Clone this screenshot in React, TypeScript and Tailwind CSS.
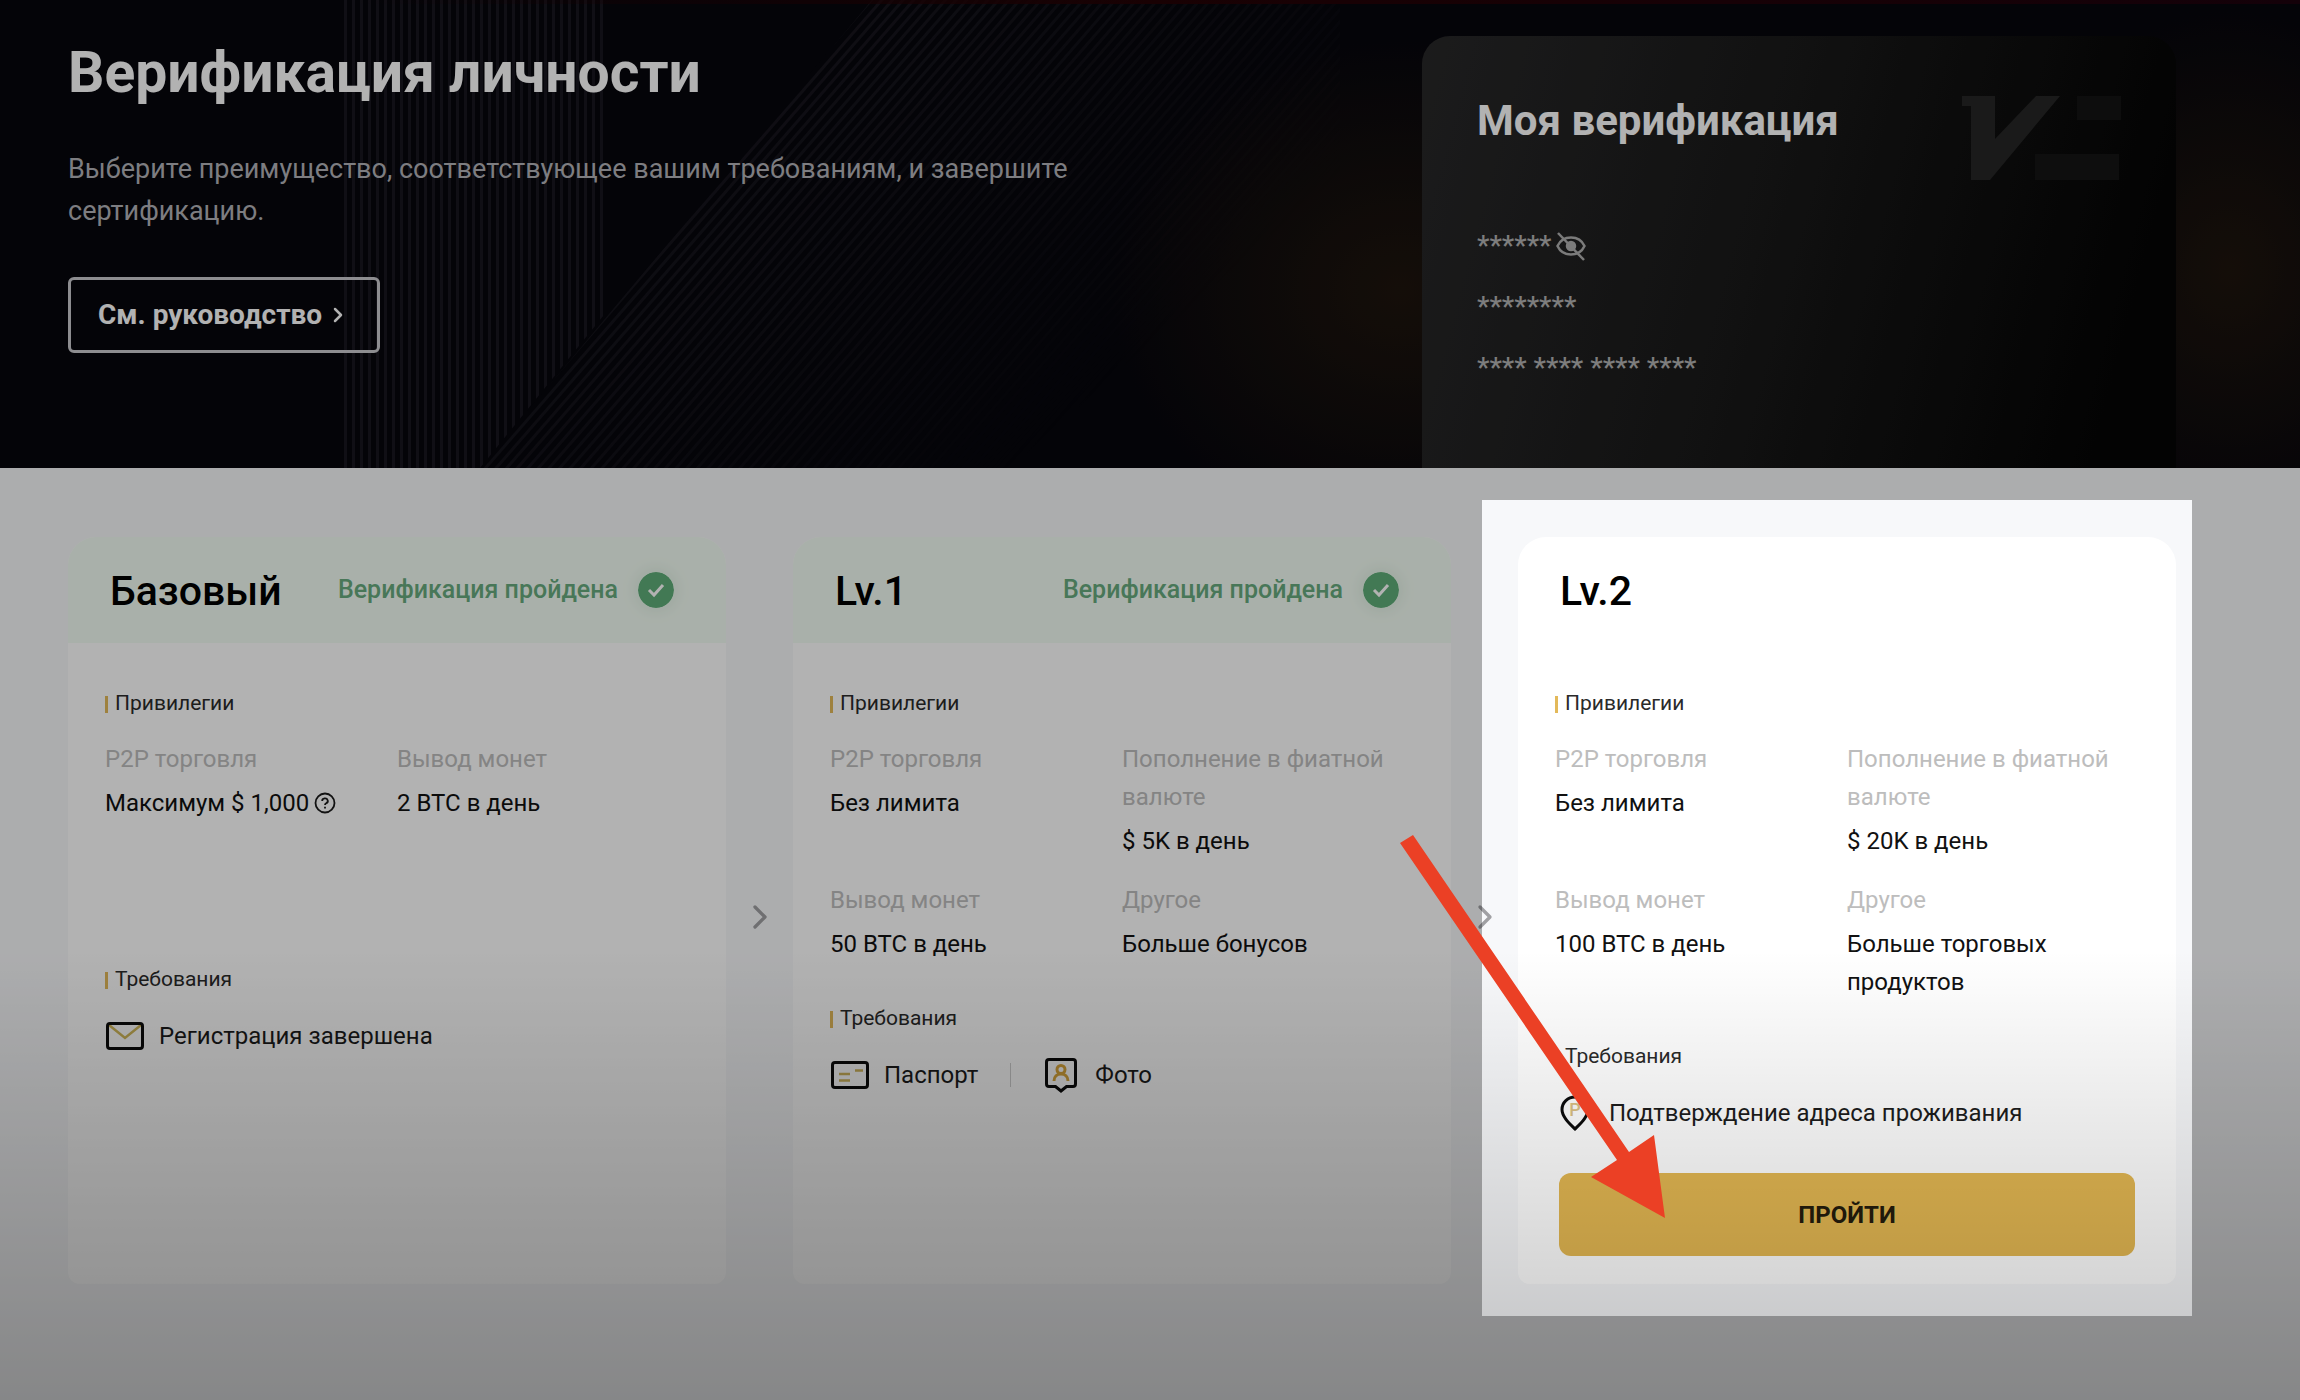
import React from 'react';
import { ChevronRight } from 'lucide-react';
import { clsx } from 'clsx';

type IconName = 'mail' | 'passport' | 'photo' | 'pin';

interface Privilege {
  label: string;
  value: string;
  help?: boolean;
}

interface Level {
  title: string;
  passed: boolean;
  privileges: Privilege[];
  requirements: { icon: IconName; text: string }[];
  action?: string;
}

const levels: Level[] = [
  {
    title: 'Базовый',
    passed: true,
    privileges: [
      { label: 'P2P торговля', value: 'Максимум $ 1,000', help: true },
      { label: 'Вывод монет', value: '2 BTC в день' },
    ],
    requirements: [{ icon: 'mail', text: 'Регистрация завершена' }],
  },
  {
    title: 'Lv.1',
    passed: true,
    privileges: [
      { label: 'P2P торговля', value: 'Без лимита' },
      { label: 'Пополнение в фиатной валюте', value: '$ 5K в день' },
      { label: 'Вывод монет', value: '50 BTC в день' },
      { label: 'Другое', value: 'Больше бонусов' },
    ],
    requirements: [
      { icon: 'passport', text: 'Паспорт' },
      { icon: 'photo', text: 'Фото' },
    ],
  },
  {
    title: 'Lv.2',
    passed: false,
    privileges: [
      { label: 'P2P торговля', value: 'Без лимита' },
      { label: 'Пополнение в фиатной валюте', value: '$ 20K в день' },
      { label: 'Вывод монет', value: '100 BTC в день' },
      { label: 'Другое', value: 'Больше торговых продуктов' },
    ],
    requirements: [{ icon: 'pin', text: 'Подтверждение адреса проживания' }],
    action: 'ПРОЙТИ',
  },
];

const RequirementIcon: React.FC<{ name: IconName }> = ({ name }) => {
  switch (name) {
    case 'mail':
      return (
        <svg className="h-9 w-10" viewBox="0 0 40 36" fill="none">
          <path d="M4 7l16 13L36 7" stroke="#d2b95a" strokeWidth="2.5" />
          <rect x="2.5" y="5.5" width="35" height="25" rx="2.5" stroke="#0c0c0c" strokeWidth="3" />
        </svg>
      );
    case 'passport':
      return (
        <svg className="h-9 w-10" viewBox="0 0 40 36" fill="none">
          <rect x="2.5" y="5.5" width="35" height="25" rx="2.5" stroke="#0c0c0c" strokeWidth="3" />
          <path d="M9 17h11M9 23.5h11M25 13.5h8" stroke="#cfb55c" strokeWidth="2.5" />
        </svg>
      );
    case 'photo':
      return (
        <svg className="h-9 w-10" viewBox="0 0 36 36" fill="none">
          <path
            d="M6 2.5h24a2.5 2.5 0 0 1 2.5 2.5v22a2.5 2.5 0 0 1-2.5 2.5h-6.5L18 34l-5.5-4.5H6A2.5 2.5 0 0 1 3.5 27V5A2.5 2.5 0 0 1 6 2.5z"
            stroke="#0c0c0c"
            strokeWidth="3"
          />
          <circle cx="18" cy="12.5" r="4" stroke="#d9a63c" strokeWidth="3" />
          <path d="M11 24c0-4.500 3-7 7-7s7 2.500 7 7" stroke="#d9a63c" strokeWidth="3" />
        </svg>
      );
    case 'pin':
      return (
        <svg className="h-9 w-10" viewBox="0 0 36 36" fill="none">
          <path d="M18 34C12 28 5 21.5 5 14.5a13 12.5 0 0 1 26 0C31 21.5 24 28 18 34z" stroke="#0c0c0c" strokeWidth="3" />
          <text x="18" y="21" textAnchor="middle" fontSize="18" fontWeight="500" fill="#dcc184">
            P
          </text>
        </svg>
      );
  }
};

const HelpIcon = () => (
  <svg className="h-6 w-6" viewBox="0 0 24 24" fill="none" stroke="#1a1a1a" strokeWidth="1.8">
    <circle cx="12" cy="12" r="9.5" />
    <path d="M9.200 10a2.800 2.500 0 1 1 4 2.200c-.8.400-1.200.9-1.200 1.800" />
    <path d="M12 15.800v1.800" />
  </svg>
);

const HiddenEyeIcon = () => (
  <svg className="h-8 w-8" viewBox="0 0 32 32" fill="none" stroke="#b0b0b0" strokeWidth="2.5">
    <path d="M2.500 16C5 10.500 10 7.500 16 7.500S27 10.500 29.500 16C27 21.500 22 24.500 16 24.500S5 21.500 2.500 16z" />
    <circle cx="16" cy="16" r="4" fill="#b0b0b0" />
    <path d="M3 3l26 27" />
  </svg>
);

const HeroPattern = () => (
  <svg className="absolute inset-0 h-full w-full" aria-hidden="true">
    <defs>
      <pattern id="vertical" width="8" height="8" patternUnits="userSpaceOnUse">
        <rect width="3" height="8" fill="#18161f" />
      </pattern>
      <pattern id="diagonal" width="8" height="8" patternUnits="userSpaceOnUse" patternTransform="rotate(41)">
        <rect width="3" height="8" fill="#1c1a22" />
      </pattern>
      <linearGradient id="fade" x1="0" y1="0" x2="1" y2="0.6">
        <stop offset="0.2" stopColor="#fff" />
        <stop offset="0.9" stopColor="#000" />
      </linearGradient>
      <mask id="fadeMask">
        <rect x="464" width="876" height="468" fill="url(#fade)" />
      </mask>
      <radialGradient id="glow">
        <stop offset="0" stopColor="#1e150d" />
        <stop offset="1" stopColor="#1e150d" stopOpacity="0" />
      </radialGradient>
      <linearGradient id="topline">
        <stop offset="0.15" stopColor="#240205" stopOpacity="0" />
        <stop offset="0.5" stopColor="#240205" />
        <stop offset="1" stopColor="#1e020d" />
      </linearGradient>
    </defs>
    <path d="M340 0H608V310L480 468H340z" fill="url(#vertical)" />
    <path d="M872 0H1340V468H480z" fill="url(#diagonal)" mask="url(#fadeMask)" />
    <ellipse cx="1400" cy="290" rx="300" ry="260" fill="url(#glow)" />
    <ellipse cx="2230" cy="270" rx="220" ry="270" fill="url(#glow)" />
    <rect width="100%" height="4" fill="url(#topline)" />
  </svg>
);

const Hero = () => (
  <header className="relative overflow-hidden bg-[#06060c] text-white">
    <HeroPattern />
    <div className="relative flex items-start justify-between gap-16 pt-9 pr-[124px] pl-[68px]">
      <div>
        <h1 className="text-[57px] leading-[74px] font-bold">Верификация личности</h1>
        <p className="mt-[38px] max-w-[1040px] text-[27px] leading-[42px] text-[#b4b4b9]">
          Выберите преимущество, соответствующее вашим требованиям, и завершите сертификацию.
        </p>
        <button className="mt-[45px] flex h-[76px] items-center gap-1 rounded-md border-[3px] border-[#cacace] px-[27px] text-[28px] font-bold">
          См. руководство
          <ChevronRight className="h-6 w-6" strokeWidth={2.5} />
        </button>
      </div>
      <section className="w-[754px] shrink-0 rounded-t-[28px] bg-linear-[105deg,#282829,#191919_45%,#050505_90%] px-[55px] pt-14 pb-20">
        <div className="flex items-start justify-between">
          <h2 className="text-[42px] leading-[58px] font-bold">Моя верификация</h2>
          <svg className="h-[88px] w-[160px]" viewBox="0 0 160 88" aria-hidden="true">
            <path d="M1 4h33v43L75 4h24L29 88H10V14H1z" fill="#262626" />
            <path d="M116 4h44v24h-44z" fill="#141414" />
            <path d="M74 62h84v26H74z" fill="#151515" />
          </svg>
        </div>
        <div className="mt-[46px] flex flex-col gap-[21px] text-[28px] leading-10 font-medium text-[#b4b4b4]">
          <div className="flex items-center gap-1">
            ******
            <button aria-label="Показать данные">
              <HiddenEyeIcon />
            </button>
          </div>
          <div>********</div>
          <div>**** **** **** ****</div>
        </div>
      </section>
    </div>
  </header>
);

const SectionLabel: React.FC<{ children: React.ReactNode }> = ({ children }) => (
  <h3 className="flex h-8 items-center gap-[7px] text-[21px] text-[#2a2a2a]">
    <span className="h-[17px] w-[3px] bg-[#e3b95a]" />
    {children}
  </h3>
);

// Lit frame and arrow that lead the user to the next step
const Spotlight = () => (
  <>
    <div className="pointer-events-none absolute -top-[37px] -right-4 -bottom-8 -left-9 z-10 shadow-[0_0_0_3000px_rgba(0,0,0,0.3)]" />
    <svg
      className="pointer-events-none absolute top-[298px] -left-[118px] z-20 h-[383px] w-[265px]"
      viewBox="1400 837 265 383"
      aria-hidden="true"
    >
      <path d="M1400 845L1413 837L1629 1154L1654 1137L1665 1220L1591 1179L1617 1162z" fill="#eb4025" />
    </svg>
  </>
);

const LevelCard: React.FC<{ level: Level }> = ({ level }) => (
  <article className="relative min-w-0 flex-1 rounded-t-[28px] rounded-b-xl bg-white">
    <div
      className={clsx(
        'flex h-[106px] items-center justify-between rounded-t-[28px] pr-[52px] pl-[42px]',
        level.passed && 'bg-[#f3fdf4]'
      )}
    >
      <h2 className="pt-1 text-[41px] font-medium text-black">{level.title}</h2>
      {level.passed && (
        <div className="flex items-center gap-5 text-[25px] font-medium text-[#67ab7e]">
          Верификация пройдена
          <svg className="h-9 w-9 rounded-full shadow-[0_0_12px_6px_#e6f4e8]" viewBox="0 0 36 36" fill="none">
            <circle cx="18" cy="18" r="18" fill="#5fae79" />
            <path d="M11 18l5 5 9-10" stroke="#fff" strokeWidth="3" />
          </svg>
        </div>
      )}
    </div>
    <div className="px-[37px] pt-[45px] pb-7">
      <SectionLabel>Привилегии</SectionLabel>
      <dl className="mt-5 grid min-h-[184px] grid-cols-2 content-start gap-y-[21px]">
        {level.privileges.map((item) => (
          <div key={item.label} className="text-[24px] leading-[38px]">
            <dt className="text-[#bdbdbd]">{item.label}</dt>
            <dd className="mt-[6px] flex max-w-[250px] items-center gap-1 text-[#111]">
              {item.value}
              {item.help && <HelpIcon />}
            </dd>
          </div>
        ))}
      </dl>
      <div className="mt-10">
        <SectionLabel>Требования</SectionLabel>
        <ul className="mt-5 flex h-10 items-center text-[24px] text-[#1c1c1c]">
          {level.requirements.map((req, i) => (
            <li key={req.text} className="flex items-center gap-[14px]">
              {i > 0 && <span className="mr-4 ml-8 h-6 w-px bg-[#d0d0d0]" />}
              <RequirementIcon name={req.icon} />
              {req.text}
            </li>
          ))}
        </ul>
      </div>
      {level.action && (
        <button className="mx-1 mt-10 flex h-[83px] w-[576px] items-center justify-center rounded-xl bg-[#e4b852] text-[24px] font-bold text-[#241c0c]">
          {level.action}
        </button>
      )}
    </div>
    {level.action && <Spotlight />}
  </article>
);

export default function App() {
  return (
    <div className="relative flex min-h-screen flex-col overflow-hidden bg-[#f7f8fa] font-['Roboto','Noto_Sans',sans-serif]">
      <Hero />
      <main className="flex flex-1 items-start pt-[69px] pr-[124px] pb-24 pl-[68px]">
        <div className="flex flex-1 items-stretch">
          {levels.map((level, i) => (
            <React.Fragment key={level.title}>
              {i > 0 && (
                <div className="flex w-[67px] shrink-0 items-center justify-center pt-3 text-[#a0a0a3]">
                  <ChevronRight className="h-10 w-10" strokeWidth={2} />
                </div>
              )}
              <LevelCard level={level} />
            </React.Fragment>
          ))}
        </div>
      </main>
      <div className="pointer-events-none absolute inset-x-0 bottom-0 h-[450px] bg-linear-to-b from-black/0 to-black/22" />
    </div>
  );
}
